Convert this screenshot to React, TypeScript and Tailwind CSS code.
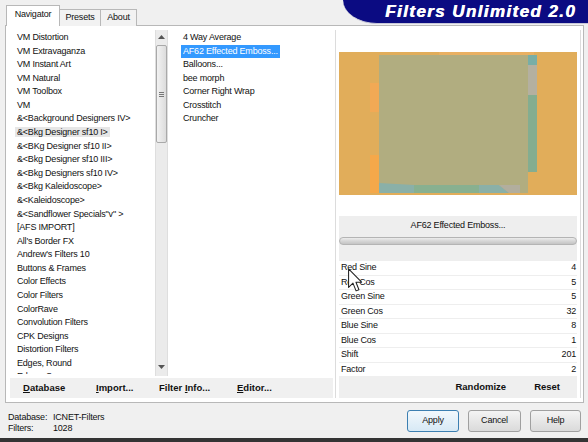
import React from 'react';

const categories = [
  'VM Distortion',
  'VM Extravaganza',
  'VM Instant Art',
  'VM Natural',
  'VM Toolbox',
  'VM',
  '&<Background Designers IV>',
  '&<Bkg Designer sf10 I>',
  '&<BKg Designer sf10 II>',
  '&<Bkg Designer sf10 III>',
  '&<Bkg Designers sf10 IV>',
  '&<Bkg Kaleidoscope>',
  '&<Kaleidoscope>',
  '&<Sandflower Specials"v" >',
  '[AFS IMPORT]',
  "All's Border FX",
  "Andrew's Filters 10",
  'Buttons & Frames',
  'Color Effects',
  'Color Filters',
  'ColorRave',
  'Convolution Filters',
  'CPK Designs',
  'Distortion Filters',
  'Edges, Round',
  'Edges, Square',
];

const filters = [
  '4 Way Average',
  'AF62 Effected Emboss...',
  'Balloons...',
  'bee morph',
  'Corner Right Wrap',
  'Crosstitch',
  'Cruncher',
];

const params: [string, number][] = [
  ['Red Sine', 4],
  ['Red Cos', 5],
  ['Green Sine', 5],
  ['Green Cos', 32],
  ['Blue Sine', 8],
  ['Blue Cos', 1],
  ['Shift', 201],
  ['Factor', 2],
];

const Preview = () => (
  <svg width="238" height="143" viewBox="0 0 238 143" className="block">
    <rect width="238" height="143" fill="#e1ad5a" />
    <rect x="100" y="0" width="95" height="3" fill="#e9b062" />
    <rect x="40" y="3" width="149" height="138" fill="#b1ad80" />
    <rect x="189" y="3" width="9" height="10" fill="#78aea6" />
    <rect x="189" y="13" width="9" height="30" fill="#b4b0a0" />
    <rect x="189" y="43" width="9" height="77" fill="#84ad90" />
    <rect x="31" y="31" width="9" height="29" fill="#f2a955" />
    <rect x="31" y="103" width="9" height="38" fill="#f5a84a" />
    <polygon points="40,131 75,133 75,141 40,141" fill="#8ab0a8" />
    <rect x="75" y="133" width="65" height="8" fill="#88b090" />
    <polygon points="140,133 160,133 170,141 140,141" fill="#8ab0a8" />
    <polygon points="160,133 181,133 181,141 170,141" fill="#b2ae9e" />
  </svg>
);

const Arrow = ({ up }: { up?: boolean }) => (
  <svg width="7" height="4" viewBox="0 0 7 4" className="block">
    <polygon points={up ? '0,4 7,4 3.5,0' : '0,0 7,0 3.5,4'} fill="#555" />
  </svg>
);

const BarButton = ({ first, rest, w }: { first: string; rest: string; w: string }) => (
  <span className={`${w} shrink-0`}>
    <span className="underline underline-offset-1">{first}</span>
    {rest}
  </span>
);

export default function App() {
  return (
    <div className="relative w-[588px] h-[442px] bg-[#f0f0f0] flex flex-col font-['Liberation_Sans',Arial,sans-serif] text-[9px] tracking-[-0.2px] text-[#111] overflow-hidden">
      {/* tab strip + banner */}
      <div className="h-[25px] flex items-end shrink-0">
        <div className="flex items-end pl-[6px] relative z-10 -mb-px">
          <div className="h-[21px] w-[54px] bg-white border border-b-0 border-[#b8b8b8] flex items-center justify-center pb-[2px]">
            Navigator
          </div>
          <div className="h-[17px] w-[41px] bg-[#f2f2f2] border border-l-0 border-b-0 border-[#b8b8b8] flex items-center justify-center">
            Presets
          </div>
          <div className="h-[17px] w-[36px] bg-[#f2f2f2] border border-l-0 border-b-0 border-[#b8b8b8] flex items-center justify-center">
            About
          </div>
        </div>
        <div className="ml-auto self-start h-[24px] w-[245px] bg-[#0b0b82] rounded-bl-[34px_24px] border-b border-[#c8c8d8] flex items-center justify-end pr-[12px]">
          <span className="text-white text-[17px] font-bold italic tracking-[1.4px] leading-none [text-shadow:0.6px_0_0_#fff]">
            Filters Unlimited 2.0
          </span>
        </div>
      </div>

      {/* main panel */}
      <div className="ml-[5px] mr-[4px] h-[378px] shrink-0 bg-white border border-[#b8b8b8] flex pt-[4px] pl-[4px] pr-[3px] pb-[4px]">
        {/* left column */}
        <div className="w-[323px] flex flex-col">
          <div className="h-[346px] flex">
            <div className="w-[145px] h-[344px] overflow-hidden pt-[1px]">
              {categories.map((c, i) => (
                <div key={c} className="h-[13.58px] leading-[13.58px] pl-[5px] whitespace-nowrap">
                  <span className={`px-[2px] ${i === 7 ? 'bg-[#e6e6e6]' : ''}`}>{c}</span>
                </div>
              ))}
            </div>
            <div className="w-[13px] h-full bg-[#ebebeb] border-x border-[#dedede] flex flex-col items-center">
              <div className="h-[14px] flex items-center">
                <Arrow up />
              </div>
              <div className="w-[11px] h-[98px] mt-[1px] bg-gradient-to-r from-[#f2f2f2] to-[#dcdcdc] border border-[#a9a9a9] rounded-[2px] flex flex-col items-center justify-center gap-[1px]">
                <div className="w-[5px] h-px bg-[#777]" />
                <div className="w-[5px] h-px bg-[#777]" />
                <div className="w-[5px] h-px bg-[#777]" />
              </div>
              <div className="flex-1" />
              <div className="h-[14px] flex items-center mb-[2px]">
                <Arrow />
              </div>
            </div>
            <div className="w-[4px]" />
            <div className="w-[161px] h-full pt-[1px]">
              {filters.map((f, i) => (
                <div key={f} className="h-[13.58px] leading-[13.58px] pl-[9px] whitespace-nowrap">
                  <span className={`px-[2px] inline-block ${i === 1 ? 'bg-[#3399ff] text-white' : ''}`}>{f}</span>
                </div>
              ))}
            </div>
          </div>
          <div className="h-[20px] mt-[2px] bg-[#f0f0f0] flex items-center pl-[13px] font-bold text-[9.5px] tracking-normal">
            <BarButton first="D" rest="atabase" w="w-[73px]" />
            <BarButton first="I" rest="mport..." w="w-[63px]" />
            <span className="w-[78px] shrink-0">
              Filter <span className="underline underline-offset-1">I</span>nfo...
            </span>
            <BarButton first="E" rest="ditor..." w="w-[60px]" />
          </div>
        </div>

        {/* right column */}
        <div className="ml-[2px] w-[246px] bg-white border-x border-[#dcdcdc] flex flex-col px-[3px]">
          <div className="h-[186px] pt-[22px]">
            <Preview />
          </div>
          <div className="h-[20px] bg-[#eeeeee] flex items-center justify-center">
            AF62 Effected Emboss...
          </div>
          <div className="h-[25px] bg-[#eeeeee] pt-[1px]">
            <div className="h-[8px] rounded-full border border-[#b4b4b4] bg-gradient-to-b from-[#ececec] via-[#d6d6d6] to-[#c4c4c4]" />
          </div>
          <div className="h-[115px] flex flex-col">
            {params.map(([label, value]) => (
              <div key={label} className="flex-1 flex items-center justify-between pl-[2px] pr-[1px] border-b border-[#eeeeee]">
                <span>{label}</span>
                <span>{value}</span>
              </div>
            ))}
          </div>
          <div className="flex-1 bg-[#efefef] flex items-center justify-end pr-[17px] gap-[28px] font-bold text-[9.5px] tracking-normal">
            <span>Randomize</span>
            <span>Reset</span>
          </div>
        </div>
      </div>

      {/* status + dialog buttons */}
      <div className="h-[35px] shrink-0 flex items-start">
        <div className="pt-[9px] pl-[8px] leading-[11px]">
          <div className="flex">
            <span className="w-[45px]">Database:</span>
            <span>ICNET-Filters</span>
          </div>
          <div className="flex">
            <span className="w-[45px]">Filters:</span>
            <span>1028</span>
          </div>
        </div>
        <div className="ml-auto mt-[7px] mr-[7px] flex gap-[9px]">
          <button className="w-[52px] h-[22px] rounded-[3px] border border-[#3c7fb1] bg-gradient-to-b from-[#f2f8fc] to-[#d7e9f5] text-[9px]">
            Apply
          </button>
          <button className="w-[53px] h-[22px] rounded-[3px] border border-[#a0a0a0] bg-gradient-to-b from-[#f4f4f4] to-[#dadada] text-[9px]">
            Cancel
          </button>
          <button className="w-[51px] h-[22px] rounded-[3px] border border-[#a0a0a0] bg-gradient-to-b from-[#f4f4f4] to-[#dadada] text-[9px]">
            Help
          </button>
        </div>
      </div>
      <div className="flex-1 bg-[#343434]" />

      {/* mouse cursor over the parameter list */}
      <svg className="absolute left-[348px] top-[268px]" width="15" height="25" viewBox="0 0 13 21">
        <path d="M0.5 0.5 L0.5 16.5 L4.3 12.8 L7 19.5 L9.5 18.5 L6.9 12 L11.8 12 Z" fill="#fff" stroke="#222" strokeWidth="0.9" strokeLinejoin="round" />
      </svg>
    </div>
  );
}
